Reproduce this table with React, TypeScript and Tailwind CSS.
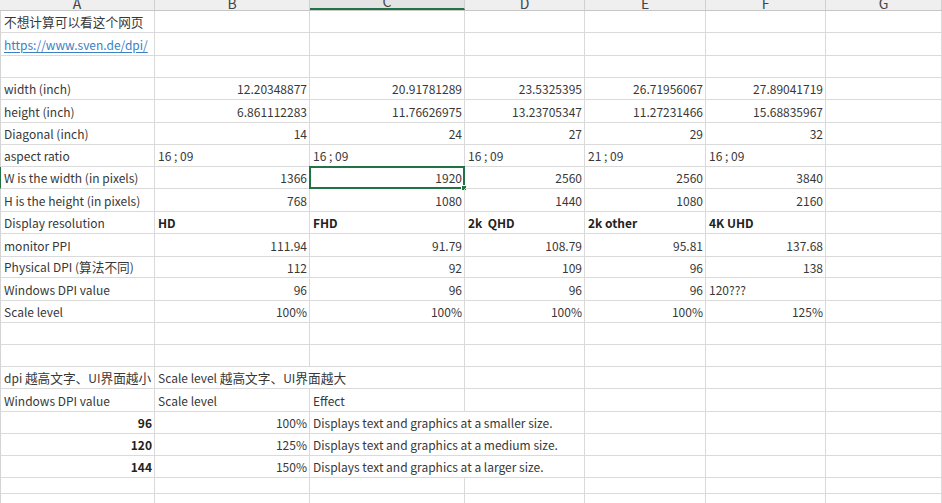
import React from 'react';

type Cell = {
  v?: string;
  align?: 'l' | 'r';
  bold?: boolean;
  span?: 2;
  link?: boolean;
  selected?: boolean;
};

type Row = { h: string; cells: Cell[] };

const COLS = ['A', 'B', 'C', 'D', 'E', 'F', 'G'];
const GRID = 'grid grid-cols-[155px_155px_155px_120px_121px_120px_1fr]';

const L = (v: string, bold = false): Cell => ({ v, align: 'l', bold });
const R = (v: string, bold = false): Cell => ({ v, align: 'r', bold });
const E: Cell = {};

const rows: Row[] = [
  { h: 'h-[22px]', cells: [L('不想计算可以看这个网页'), E, E, E, E, E, E] },
  { h: 'h-[23px]', cells: [{ v: 'https://www.sven.de/dpi/', align: 'l', link: true }, E, E, E, E, E, E] },
  { h: 'h-[22px]', cells: [E, E, E, E, E, E, E] },
  { h: 'h-[22px]', cells: [L('width (inch)'), R('12.20348877'), R('20.91781289'), R('23.5325395'), R('26.71956067'), R('27.89041719'), E] },
  { h: 'h-[23px]', cells: [L('height (inch)'), R('6.861112283'), R('11.76626975'), R('13.23705347'), R('11.27231466'), R('15.68835967'), E] },
  { h: 'h-[22px]', cells: [L('Diagonal (inch)'), R('14'), R('24'), R('27'), R('29'), R('32'), E] },
  { h: 'h-[22px]', cells: [L('aspect ratio'), L('16 ; 09'), L('16 ; 09'), L('16 ; 09'), L('21 ; 09'), L('16 ; 09'), E] },
  { h: 'h-[22px]', cells: [L('W is the width (in pixels)'), R('1366'), { v: '1920', align: 'r', selected: true }, R('2560'), R('2560'), R('3840'), E] },
  { h: 'h-[23px]', cells: [L('H is the height (in pixels)'), R('768'), R('1080'), R('1440'), R('1080'), R('2160'), E] },
  { h: 'h-[22px]', cells: [L('Display resolution'), L('HD', true), L('FHD', true), L('2k  QHD', true), L('2k other', true), L('4K UHD', true), E] },
  { h: 'h-[23px]', cells: [L('monitor PPI'), R('111.94'), R('91.79'), R('108.79'), R('95.81'), R('137.68'), E] },
  { h: 'h-[21px]', cells: [L('Physical DPI (算法不同)'), R('112'), R('92'), R('109'), R('96'), R('138'), E] },
  { h: 'h-[23px]', cells: [L('Windows DPI value'), R('96'), R('96'), R('96'), R('96'), L('120???'), E] },
  { h: 'h-[22px]', cells: [L('Scale level'), R('100%'), R('100%'), R('100%'), R('100%'), R('125%'), E] },
  { h: 'h-[22px]', cells: [E, E, E, E, E, E, E] },
  { h: 'h-[22px]', cells: [E, E, E, E, E, E, E] },
  { h: 'h-[22px]', cells: [L('dpi 越高文字、UI界面越小'), { v: 'Scale level 越高文字、UI界面越大', align: 'l', span: 2 }, E, E, E, E] },
  { h: 'h-[23px]', cells: [L('Windows DPI value'), L('Scale level'), L('Effect'), E, E, E, E] },
  { h: 'h-[22px]', cells: [R('96', true), R('100%'), { v: 'Displays text and graphics at a smaller size.', align: 'l', span: 2 }, E, E, E] },
  { h: 'h-[22px]', cells: [R('120', true), R('125%'), { v: 'Displays text and graphics at a medium size.', align: 'l', span: 2 }, E, E, E] },
  { h: 'h-[22px]', cells: [R('144', true), R('150%'), { v: 'Displays text and graphics at a larger size.', align: 'l', span: 2 }, E, E, E] },
  { h: 'h-[16px]', cells: [E, E, E, E, E, E, E] },
  { h: 'h-[22px]', cells: [E, E, E, E, E, E, E] },
];

// CJK glyphs sit a touch larger than the latin text in the sheet
const renderText = (s: string) =>
  s.split(/([\u3000-\u303f\u4e00-\u9fff]+)/).map((part, i) =>
    /[\u3000-\u303f\u4e00-\u9fff]/.test(part) ? (
      <span key={i} className="text-[12.7px]">
        {part}
      </span>
    ) : (
      part
    )
  );

const SheetCell: React.FC<{ cell: Cell; first: boolean; rowSelected: boolean }> = ({ cell, first, rowSelected }) => {
  const cls = [
    'relative flex items-center min-w-0 whitespace-pre border-r border-b border-[#dadada] pt-[1px]',
    cell.span === 2 ? 'col-span-2' : '',
    cell.align === 'r' ? 'justify-end pr-[2px]' : 'justify-start pl-[3px]',
    first ? (rowSelected ? 'border-l border-l-[#217346]' : 'border-l border-l-[#d4d4d4]') : '',
  ].join(' ');

  return (
    <div className={cls}>
      {cell.v && (
        <span
          className={
            cell.link
              ? 'text-[#3b7fc4] underline underline-offset-2'
              : cell.bold
                ? 'font-bold text-[#222]'
                : 'text-[#383838]'
          }
        >
          {renderText(cell.v)}
        </span>
      )}
      {cell.selected && (
        <div className="absolute -left-[1px] -top-[1px] -right-[1px] -bottom-[1px] border-2 border-[#217346]">
          <div className="absolute -right-[4px] -bottom-[4px] h-[6px] w-[6px] bg-[#217346] border border-white" />
        </div>
      )}
    </div>
  );
};

export default function App() {
  return (
    <div
      className="h-[503px] w-[942px] overflow-hidden bg-white text-[12px] leading-none"
      style={{ fontFamily: '"Noto Sans CJK SC", "Noto Sans", sans-serif' }}
    >
      <div className={`${GRID} h-[11px] border-b border-[#c6c6c6]`}>
        {COLS.map(c => (
          <div
            key={c}
            className={
              'flex items-end justify-center overflow-hidden border-r border-[#d0d0d0] ' +
              (c === 'C' ? 'bg-[#e4e4e4] border-b-2 border-b-[#217346]' : 'bg-[#efefef]')
            }
          >
            <span className="text-[14px] leading-[14px] text-[#444]">{c}</span>
          </div>
        ))}
      </div>
      {rows.map((row, i) => (
        <div key={i} className={`${GRID} ${row.h}`}>
          {row.cells.map((cell, j) => (
            <SheetCell key={j} cell={cell} first={j === 0} rowSelected={i === 7} />
          ))}
        </div>
      ))}
    </div>
  );
}
